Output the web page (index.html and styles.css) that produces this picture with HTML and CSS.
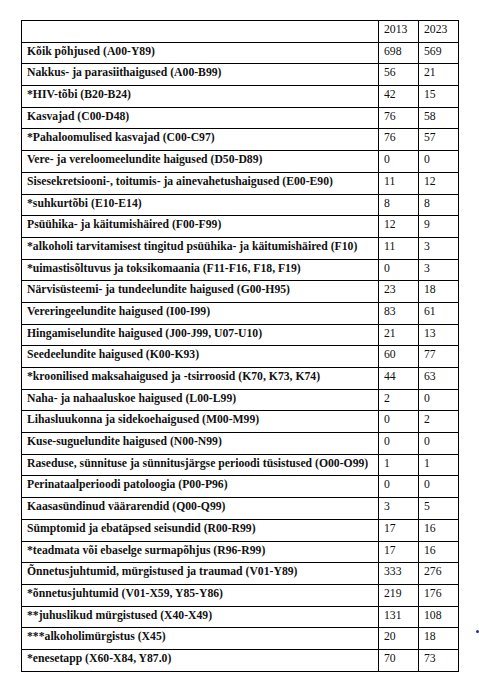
FILE: index.html
```html
<!DOCTYPE html>
<html>
<head>
<meta charset="utf-8">
<link rel="stylesheet" href="styles.css">
</head>
<body>
<div class="page">
<table class="stats">
<tr><td class="lbl"></td><td class="num">2013</td><td class="num">2023</td></tr>
<tr><td class="lbl">Kõik põhjused (A00-Y89)</td><td class="num">698</td><td class="num">569</td></tr>
<tr><td class="lbl">Nakkus- ja parasiithaigused (A00-B99)</td><td class="num">56</td><td class="num">21</td></tr>
<tr><td class="lbl">*HIV-tõbi (B20-B24)</td><td class="num">42</td><td class="num">15</td></tr>
<tr><td class="lbl">Kasvajad (C00-D48)</td><td class="num">76</td><td class="num">58</td></tr>
<tr><td class="lbl">*Pahaloomulised kasvajad (C00-C97)</td><td class="num">76</td><td class="num">57</td></tr>
<tr><td class="lbl">Vere- ja vereloomeelundite haigused (D50-D89)</td><td class="num">0</td><td class="num">0</td></tr>
<tr><td class="lbl">Sisesekretsiooni-, toitumis- ja ainevahetushaigused (E00-E90)</td><td class="num">11</td><td class="num">12</td></tr>
<tr><td class="lbl">*suhkurtõbi (E10-E14)</td><td class="num">8</td><td class="num">8</td></tr>
<tr><td class="lbl">Psüühika- ja käitumishäired (F00-F99)</td><td class="num">12</td><td class="num">9</td></tr>
<tr><td class="lbl">*alkoholi tarvitamisest tingitud psüühika- ja käitumishäired (F10)</td><td class="num">11</td><td class="num">3</td></tr>
<tr><td class="lbl">*uimastisõltuvus ja toksikomaania (F11-F16, F18, F19)</td><td class="num">0</td><td class="num">3</td></tr>
<tr><td class="lbl">Närvisüsteemi- ja tundeelundite haigused (G00-H95)</td><td class="num">23</td><td class="num">18</td></tr>
<tr><td class="lbl">Vereringeelundite haigused (I00-I99)</td><td class="num">83</td><td class="num">61</td></tr>
<tr><td class="lbl">Hingamiselundite haigused (J00-J99, U07-U10)</td><td class="num">21</td><td class="num">13</td></tr>
<tr><td class="lbl">Seedeelundite haigused (K00-K93)</td><td class="num">60</td><td class="num">77</td></tr>
<tr><td class="lbl">*kroonilised maksahaigused ja -tsirroosid (K70, K73, K74)</td><td class="num">44</td><td class="num">63</td></tr>
<tr><td class="lbl">Naha- ja nahaaluskoe haigused (L00-L99)</td><td class="num">2</td><td class="num">0</td></tr>
<tr><td class="lbl">Lihasluukonna ja sidekoehaigused (M00-M99)</td><td class="num">0</td><td class="num">2</td></tr>
<tr><td class="lbl">Kuse-suguelundite haigused (N00-N99)</td><td class="num">0</td><td class="num">0</td></tr>
<tr><td class="lbl">Raseduse, sünnituse ja sünnitusjärgse perioodi tüsistused (O00-O99)</td><td class="num">1</td><td class="num">1</td></tr>
<tr><td class="lbl">Perinataalperioodi patoloogia (P00-P96)</td><td class="num">0</td><td class="num">0</td></tr>
<tr><td class="lbl">Kaasasündinud väärarendid (Q00-Q99)</td><td class="num">3</td><td class="num">5</td></tr>
<tr><td class="lbl">Sümptomid ja ebatäpsed seisundid (R00-R99)</td><td class="num">17</td><td class="num">16</td></tr>
<tr><td class="lbl">*teadmata või ebaselge surmapõhjus (R96-R99)</td><td class="num">17</td><td class="num">16</td></tr>
<tr><td class="lbl">Õnnetusjuhtumid, mürgistused ja traumad (V01-Y89)</td><td class="num">333</td><td class="num">276</td></tr>
<tr><td class="lbl">*õnnetusjuhtumid (V01-X59, Y85-Y86)</td><td class="num">219</td><td class="num">176</td></tr>
<tr><td class="lbl">**juhuslikud mürgistused (X40-X49)</td><td class="num">131</td><td class="num">108</td></tr>
<tr><td class="lbl">***alkoholimürgistus (X45)</td><td class="num">20</td><td class="num">18</td></tr>
<tr><td class="lbl">*enesetapp (X60-X84, Y87.0)</td><td class="num">70</td><td class="num">73</td></tr>
</table>
<span class="dot"></span>
</div>
</body>
</html>
```
FILE: styles.css
```css
html, body {
  margin: 0;
  padding: 0;
  background: #ffffff;
}
.page {
  position: relative;
  padding: 20px 0 0 21px;
  width: 458px;
  height: 666px;
}
.stats {
  border-collapse: collapse;
  table-layout: fixed;
  width: 435px;
  font-family: "Liberation Serif", "Times New Roman", serif;
  font-size: 11.7px;
  color: #111;
}
.stats tr {
  height: 21.7px;
}
.stats td {
  border: 1px solid #000;
  vertical-align: top;
  padding: 2px 0 0 5px;
  line-height: 13px;
  white-space: nowrap;
  overflow: hidden;
}
.stats td.lbl {
  width: 351px;
  font-weight: bold;
}
.stats td.num {
  width: 34px;
  font-weight: normal;
}
.dot {
  position: absolute;
  left: 476px;
  top: 630px;
  width: 3px;
  height: 3px;
  background: #2a2aa0;
  border-radius: 50%;
}
```
